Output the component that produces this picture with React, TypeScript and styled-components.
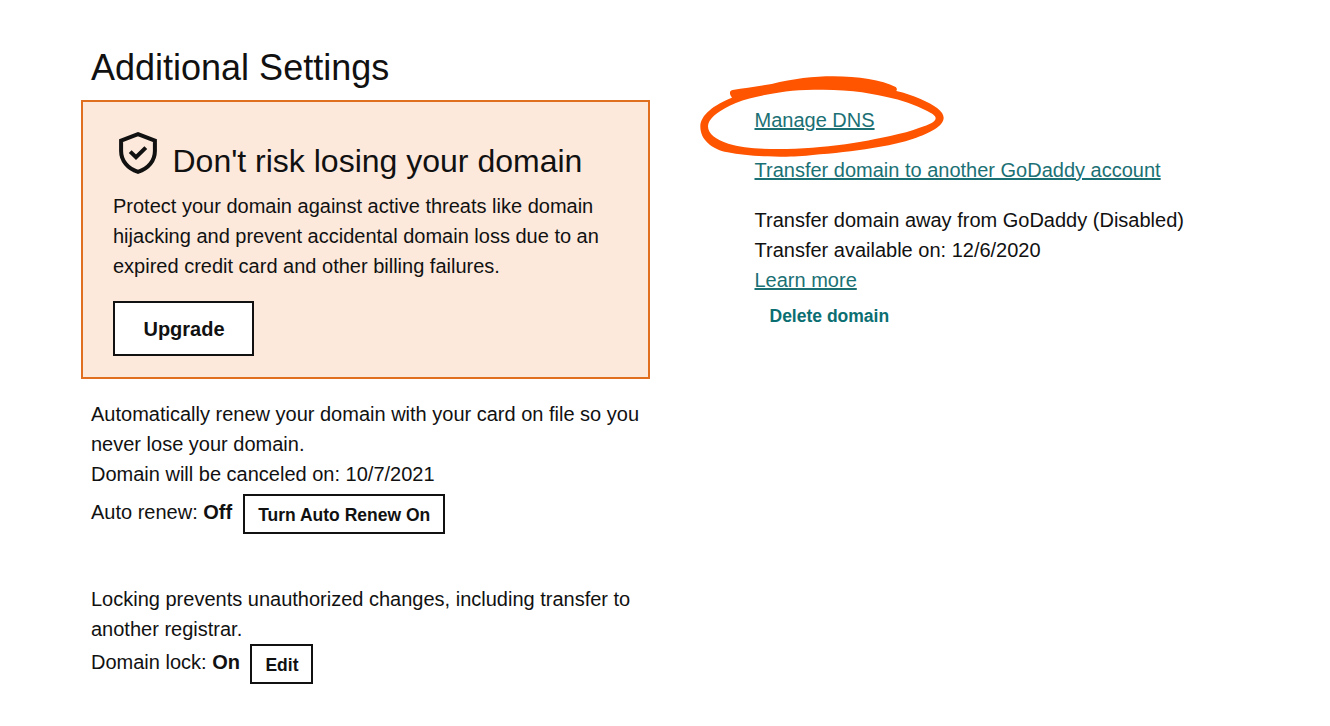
import React from "react";
import styled, { createGlobalStyle } from "styled-components";

const Global = createGlobalStyle`
  * { box-sizing: border-box; }
  body {
    margin: 0;
    background: #fff;
    color: #111;
    font-family: "Liberation Sans", Arial, sans-serif;
    font-size: 20px;
    line-height: 30px;
  }
`;

const Page = styled.main`
  display: flex;
  align-items: flex-start;
  width: 1330px;
  height: 726px;
  overflow: hidden;
  padding: 46px 0 0 81px;
`;

const SettingsColumn = styled.section`
  width: 569px;
`;

const PageTitle = styled.h1`
  margin: 0 0 10px 10px;
  font-size: 36px;
  font-weight: 400;
  line-height: 44px;
`;

const Notice = styled.article`
  height: 279px;
  padding: 30px;
  border: 2px solid #e07020;
  background: #fce9dc;
`;

const NoticeHeader = styled.header`
  display: flex;
  align-items: flex-start;
  gap: 14.5px;
  height: 59px;
  padding-left: 5px;
`;

const NoticeTitle = styled.h2`
  margin: 9px 0 0;
  font-size: 32px;
  font-weight: 400;
  line-height: 40px;
  white-space: nowrap;
`;

const Text = styled.p<{ $top?: number }>`
  margin: ${(p) => p.$top ?? 0}px 0 0;
  white-space: nowrap;
`;

const Button = styled.button<{ $large?: boolean }>`
  height: ${(p) => (p.$large ? 55 : 40)}px;
  padding: ${(p) => (p.$large ? "2px 0 0 1px" : "3px 0 0 1px")};
  border: 2px solid #111;
  background: #fff;
  color: #111;
  font: bold ${(p) => (p.$large ? 20 : 17.5)}px "Liberation Sans", Arial, sans-serif;
  white-space: nowrap;
`;

const UpgradeButton = styled(Button)`
  width: 141px;
  margin-top: 20px;
`;

const RenewButton = styled(Button)`
  width: 202px;
`;

const EditButton = styled(Button)`
  width: 63px;
  padding-left: 0;
`;

const Setting = styled.section<{ $top: number }>`
  margin: ${(p) => p.$top}px 0 0 10px;
`;

const StatusRow = styled.div<{ $top: number }>`
  display: flex;
  align-items: flex-start;
  gap: 10.5px;
  margin-top: ${(p) => p.$top}px;
`;

const Status = styled.span<{ $drop: number }>`
  margin-top: ${(p) => p.$drop}px;
  white-space: nowrap;
`;

const ActionsColumn = styled.section`
  display: flex;
  flex-direction: column;
  align-items: flex-start;
  width: 480px;
  margin: 59px 0 0 104.5px;
`;

const Link = styled.a`
  color: #1b7074;
  text-decoration: underline;
  text-decoration-thickness: 2px;
  text-underline-offset: 1px;
  white-space: nowrap;
`;

const CircledItem = styled.div`
  position: relative;
  margin-bottom: 20px;
`;

const Marker = styled.svg`
  position: absolute;
  left: -64.5px;
  top: -39px;
  pointer-events: none;
`;

const DeleteLink = styled.a`
  margin: 6px 0 0 15px;
  color: #0b6f72;
  font-size: 17.5px;
  font-weight: 700;
`;

function ShieldIcon() {
  return (
    <svg width="40" height="44" viewBox="0 0 40 44" fill="none" stroke="#111" strokeWidth="4">
      <path d="M20 2.2 L36.9 8.6 V19 C36.9 28.5 30.5 36.7 20 39.8 C9.5 36.7 3.1 28.5 3.1 19 V8.6 Z" />
      <path d="M12.2 19.6 L18 25.2 L27.8 15.6" />
    </svg>
  );
}

function MarkerCircle() {
  return (
    <Marker width="270" height="100" viewBox="0 0 810 300" aria-hidden="true">
      <path
        fill="#ff5400"
        fillRule="evenodd"
        d="M128 72 C165 66 205 61 245 54 C310 38 370 31 430 31 C505 31 575 42 617 63 Q623 68 619 75 C645 81 668 89 690 98 C735 117 761 136 761 155 C761 180 720 201 670 218 C640 228 605 236 570 242 C510 253 455 259 390 265 C350 270 320 272 290 272 C220 272 160 269 113 259 C64 249 31 220 31 182 C31 146 73 116 126 95 Q117 86 121 76 Q123 73 128 72 Z
           M201 92 C170 98 143 107 119 119 C80 139 54 159 54 181 C54 203 77 221 115 233 C160 247 225 250 290 249 C325 248 360 246 390 243 C460 237 525 226 575 215 C610 208 642 201 670 192 C710 179 737 170 737 157 C737 148 726 142 710 134 C675 117 635 102 590 93 C558 86 525 80 490 76 C450 72 410 71 370 71 C305 71 247 82 201 92 Z"
      />
    </Marker>
  );
}

export default function App() {
  return (
    <>
      <Global />
      <Page>
        <SettingsColumn>
          <PageTitle>Additional Settings</PageTitle>
          <Notice>
            <NoticeHeader>
              <ShieldIcon />
              <NoticeTitle>Don't risk losing your domain</NoticeTitle>
            </NoticeHeader>
            <Text>
              Protect your domain against active threats like domain
              <br />
              hijacking and prevent accidental domain loss due to an
              <br />
              expired credit card and other billing failures.
            </Text>
            <UpgradeButton $large>Upgrade</UpgradeButton>
          </Notice>
          <Setting $top={20}>
            <Text>
              Automatically renew your domain with your card on file so you
              <br />
              never lose your domain.
              <br />
              Domain will be canceled on: 10/7/2021
            </Text>
            <StatusRow $top={5}>
              <Status $drop={3}>
                Auto renew: <b>Off</b>
              </Status>
              <RenewButton>Turn Auto Renew On</RenewButton>
            </StatusRow>
          </Setting>
          <Setting $top={50}>
            <Text>
              Locking prevents unauthorized changes, including transfer to
              <br />
              another registrar.
            </Text>
            <StatusRow $top={0}>
              <Status $drop={3}>
                Domain lock: <b>On</b>
              </Status>
              <EditButton>Edit</EditButton>
            </StatusRow>
          </Setting>
        </SettingsColumn>
        <ActionsColumn>
          <CircledItem>
            <Link>Manage DNS</Link>
            <MarkerCircle />
          </CircledItem>
          <Link>Transfer domain to another GoDaddy account</Link>
          <Text $top={20}>
            Transfer domain away from GoDaddy (Disabled)
            <br />
            Transfer available on: 12/6/2020
          </Text>
          <Link>Learn more</Link>
          <DeleteLink>Delete domain</DeleteLink>
        </ActionsColumn>
      </Page>
    </>
  );
}
